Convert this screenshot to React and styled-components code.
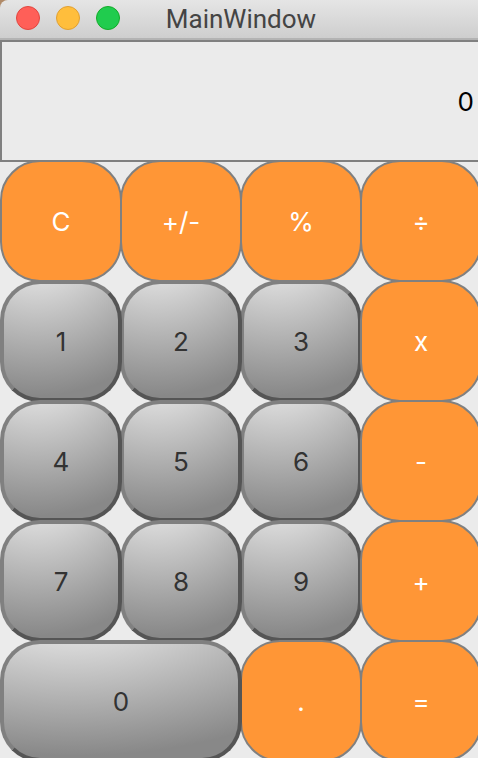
import React, { useState } from "react";
import styled, { createGlobalStyle } from "styled-components";

const GlobalStyle = createGlobalStyle`
  * { box-sizing: border-box; }
  body {
    margin: 0;
    overflow: hidden;
    background: #ebebeb;
    font-family: Inter, "Liberation Sans", sans-serif;
  }
`;

const Window = styled.main`
  min-height: 100vh;
  overflow: hidden;
  background: linear-gradient(#b08a68 0 20px, #ebebeb 20px);
`;

const TitleBar = styled.header`
  display: grid;
  grid-template-columns: 1fr auto 1fr;
  align-items: center;
  height: 40px;
  padding: 0 12px 2px 16px;
  border-bottom: 2px solid #b3b3b3;
  border-top-left-radius: 8px;
  background: linear-gradient(#e5e5e5, #cecece);
`;

const Lights = styled.div`
  display: flex;
  gap: 16px;
`;

const Light = styled.button`
  width: 24px;
  height: 24px;
  padding: 0;
  border: 1px solid ${(p) => p.$edge};
  border-radius: 50%;
  background: ${(p) => p.$fill};
`;

const Title = styled.h1`
  margin: 0;
  padding-top: 2px;
  color: #444;
  font: 400 26px/32px Roboto, sans-serif;
`;

const Calculator = styled.section`
  width: calc(100% + 4px);
`;

const Display = styled.output`
  display: flex;
  align-items: center;
  justify-content: flex-end;
  height: 122px;
  padding: 2px 6px 0 0;
  border: 2px solid #808080;
  background: #ebebeb;
  color: #000;
  font-size: 26px;
  line-height: 32px;
`;

const Keypad = styled.div`
  display: grid;
  grid-template-columns: repeat(4, 1fr);
  grid-auto-rows: 120px;
  margin: -2px 2px 0 0;
`;

const Key = styled.button`
  position: relative;
  z-index: ${(p) => p.$layer};
  grid-column: span ${(p) => p.$span || 1};
  margin: 0 -2px -2px 0;
  padding: 2px 0 0;
  border-radius: 40px;
  font: 400 26px/32px Inter, "Liberation Sans", sans-serif;
`;

const OperatorKey = styled(Key)`
  border: 2px solid #808080;
  background: #ff9636;
  color: #fff;
`;

const DigitKey = styled(Key)`
  border: 4px solid;
  border-color: #808080 #555 #555 #808080;
  background: radial-gradient(135% 135% at 30% -40%, #fff, #888) border-box;
  color: #333;
`;

const rows = [
  ["C", "+/-", "%", "÷"],
  ["1", "2", "3", "x"],
  ["4", "5", "6", "-"],
  ["7", "8", "9", "+"],
  ["0", ".", "="],
];

const operations = {
  "÷": (a, b) => a / b,
  x: (a, b) => a * b,
  "-": (a, b) => a - b,
  "+": (a, b) => a + b,
};

const initial = { value: "0", stored: null, operator: null, fresh: true };

function press(state, key) {
  const number = Number(state.value);
  if (/\d/.test(key)) {
    return { ...state, value: state.fresh ? key : state.value + key, fresh: false };
  }
  if (key === "C") return initial;
  if (key === "+/-") return { ...state, value: String(-number) };
  if (key === "%") return { ...state, value: String(number / 100) };
  if (key === ".") {
    if (state.fresh) return { ...state, value: "0.", fresh: false };
    return state.value.includes(".") ? state : { ...state, value: state.value + "." };
  }
  const result =
    state.operator && !state.fresh
      ? operations[state.operator](state.stored, number)
      : number;
  return {
    value: String(result),
    stored: result,
    operator: key === "=" ? null : key,
    fresh: true,
  };
}

export default function App() {
  const [state, setState] = useState(initial);

  return (
    <Window>
      <GlobalStyle />
      <TitleBar>
        <Lights>
          <Light aria-label="Close" $fill="#ff5f58" $edge="#e2463f" />
          <Light aria-label="Minimize" $fill="#ffbe3c" $edge="#e1a032" />
          <Light aria-label="Zoom" $fill="#20cc4e" $edge="#12ac28" />
        </Lights>
        <Title>MainWindow</Title>
      </TitleBar>
      <Calculator>
        <Display>{state.value}</Display>
        <Keypad>
          {rows.map((row, r) =>
            row.map((key, c) => {
              const isDigit = /\d/.test(key);
              const KeyType = isDigit ? DigitKey : OperatorKey;
              const isRightmost = c === row.length - 1;
              const layer = r * 5 + (isRightmost ? 4 : 3 - c);
              return (
                <KeyType
                  key={key}
                  $layer={layer}
                  $span={key === "0" ? 2 : 1}
                  onClick={() => setState((s) => press(s, key))}
                >
                  {key}
                </KeyType>
              );
            })
          )}
        </Keypad>
      </Calculator>
    </Window>
  );
}
